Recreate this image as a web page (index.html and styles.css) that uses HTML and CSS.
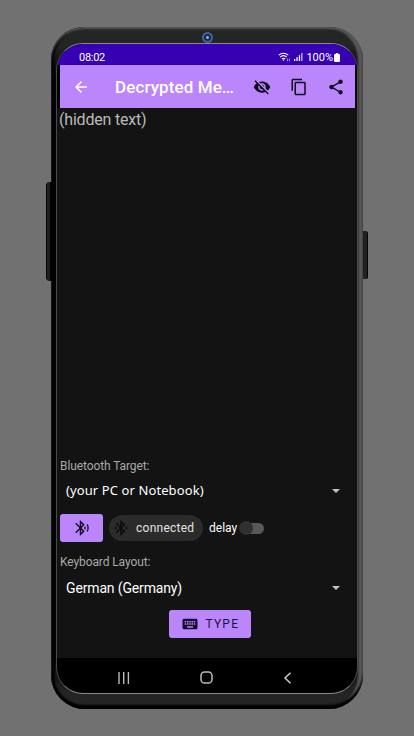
FILE: index.html
```html
<!DOCTYPE html>
<html lang="en">
<head>
<meta charset="utf-8">
<title>Decrypted Message</title>
<link rel="stylesheet" href="styles.css">
</head>
<body>
<div class="phone">
  <span class="side-button volume"></span>
  <span class="side-button power"></span>
  <span class="camera"></span>
  <div class="screen">
    <div class="status">
      <span class="clock">08:02</span>
      <svg class="wifi" width="13" height="10" viewBox="0 0 13 10" fill="none" stroke="#fff" stroke-width="1.1"><path d="M.7 3.2Q5.5-.8 10.3 3.2M2.2 5.1Q5.5 2.2 8.8 5.1M3.8 6.9Q5.5 5.5 7.2 6.9"/><path d="M4.3 7.5h2.4L5.5 9z" fill="#fff" stroke="none"/><path d="M9.5 6.5v2.8M11.4 6.5v2.8" stroke="#a99be0" stroke-width=".9"/></svg>
      <svg class="signal" width="9" height="8" viewBox="0 0 9 8" fill="#fff"><path d="M0 6h1.3v2H0zM2.4 4.3h1.3V8H2.4zM4.8 2.2h1.3V8H4.8z"/><path d="M7.2 0h1.3v8H7.2z" opacity=".75"/></svg>
      <span class="percent">100%</span>
      <svg class="battery" width="6" height="9" viewBox="0 0 6 9"><path d="M1.8 0h2.4v1H5q1 0 1 1v6q0 1-1 1H1Q0 9 0 8V2q0-1 1-1h.8z" fill="#fff"/></svg>
    </div>
    <div class="appbar">
      <svg class="back" width="18" height="18" viewBox="0 0 24 24" fill="#fff"><path d="M20 11H7.83l5.59-5.59L12 4l-8 8 8 8 1.41-1.41L7.83 13H20z"/></svg>
      <h1 class="title">Decrypted Me…</h1>
      <svg class="action" width="18" height="18" viewBox="0 0 24 24"><path d="M12 7c2.76 0 5 2.24 5 5 0 .65-.13 1.26-.36 1.83l2.92 2.92c1.51-1.26 2.7-2.89 3.43-4.75-1.73-4.39-6-7.5-11-7.5-1.4 0-2.74.25-3.98.7l2.16 2.16C10.74 7.13 11.35 7 12 7zM2 4.27l2.28 2.28.46.46C3.08 8.3 1.78 10.02 1 12c1.73 4.39 6 7.5 11 7.5 1.55 0 3.03-.3 4.38-.84l.42.42L19.73 22 21 20.73 3.27 3 2 4.27zM7.53 9.8l1.55 1.55c-.05.21-.08.43-.08.65 0 1.66 1.34 3 3 3 .22 0 .44-.03.65-.08l1.55 1.55c-.67.33-1.41.53-2.2.53-2.76 0-5-2.24-5-5 0-.79.2-1.53.53-2.2zm4.31-.78l3.15 3.15.02-.16c0-1.66-1.34-3-3-3l-.17.01z"/></svg>
      <svg class="action" width="18" height="18" viewBox="0 0 24 24"><path d="M16 1H4c-1.1 0-2 .9-2 2v14h2V3h12V1zm3 4H8c-1.1 0-2 .9-2 2v14c0 1.1.9 2 2 2h11c1.1 0 2-.9 2-2V7c0-1.1-.9-2-2-2zm0 16H8V7h11v14z"/></svg>
      <svg class="action" width="18" height="18" viewBox="0 0 24 24"><path d="M18 16.08c-.76 0-1.44.3-1.96.77L8.91 12.7c.05-.23.09-.46.09-.7s-.04-.47-.09-.7l7.05-4.11c.54.5 1.25.81 2.04.81 1.66 0 3-1.34 3-3s-1.34-3-3-3-3 1.34-3 3c0 .24.04.47.09.7L8.04 9.81C7.5 9.31 6.79 9 6 9c-1.66 0-3 1.34-3 3s1.34 3 3 3c.79 0 1.5-.31 2.04-.81l7.12 4.16c-.05.21-.08.43-.08.65 0 1.61 1.31 2.92 2.92 2.92s2.92-1.31 2.92-2.92-1.31-2.92-2.92-2.92z"/></svg>
    </div>
    <div class="content">
      <p class="message">(hidden text)</p>
      <div class="label">Bluetooth Target:</div>
      <div class="select target"><span>(your PC or Notebook)</span><i class="caret"></i></div>
      <div class="row">
        <div class="bt-button"><svg width="18" height="18" viewBox="0 0 24 24" fill="#18102a"><path d="M14.24 12.01l2.32 2.32c.28-.72.44-1.51.44-2.33 0-.82-.16-1.59-.43-2.31l-2.33 2.32zm5.29-5.3l-1.26 1.26c.63 1.21.98 2.57.98 4.02s-.36 2.82-.98 4.02l1.2 1.2c.97-1.54 1.54-3.36 1.54-5.31-.01-1.89-.55-3.67-1.48-5.19zm-3.82 1L10 2H9v7.59L4.41 5 3 6.41 8.59 12 3 17.59 4.41 19 9 14.41V22h1l5.71-5.71-4.3-4.29 4.3-4.29zM11 5.83l1.88 1.88L11 9.59V5.83zm1.88 10.46L11 18.17v-3.76l1.88 1.88z"/></svg></div>
        <div class="chip"><svg width="18" height="18" viewBox="0 0 24 24" fill="#0c0c0c"><path d="M7 12l-2-2-2 2 2 2 2-2zm10.71-4.29L12 2h-1v7.59L6.41 5 5 6.41 10.59 12 5 17.59 6.41 19 11 14.41V22h1l5.71-5.71-4.3-4.29 4.3-4.29zM13 5.83l1.88 1.88L13 9.59V5.83zm1.88 10.46L13 18.17v-3.76l1.88 1.88zM19 10l-2 2 2 2 2-2-2-2z"/></svg><span>connected</span></div>
        <span class="delay">delay</span>
        <span class="switch"><i class="thumb"></i></span>
      </div>
      <div class="label keyboard">Keyboard Layout:</div>
      <div class="select layout"><span>German (Germany)</span><i class="caret"></i></div>
      <div class="type-button"><svg width="18" height="18" viewBox="0 0 24 24" fill="#150b28"><path d="M20 5H4c-1.1 0-1.99.9-1.99 2L2 17c0 1.1.9 2 2 2h16c1.1 0 2-.9 2-2V7c0-1.1-.9-2-2-2zm-9 3h2v2h-2V8zm0 3h2v2h-2v-2zM8 8h2v2H8V8zm0 3h2v2H8v-2zm-1 2H5v-2h2v2zm0-3H5V8h2v2zm9 7H8v-2h8v2zm0-4h-2v-2h2v2zm0-3h-2V8h2v2zm3 3h-2v-2h2v2zm0-3h-2V8h2v2z"/></svg><span>TYPE</span></div>
    </div>
    <div class="nav">
      <svg width="12" height="12" viewBox="0 0 12 12" stroke="#bbb" stroke-width="1.4"><path d="M1 0v12M5.7 0v12M10.4 0v12"/></svg>
      <svg width="13" height="13" viewBox="0 0 13 13" fill="none" stroke="#bbb" stroke-width="1.5"><rect x="1" y="1" width="11" height="11" rx="3.6"/></svg>
      <svg width="12" height="12" viewBox="0 0 12 12" fill="none" stroke="#ccc" stroke-width="1.5"><path d="M8.5.7L3 6l5.5 5.3"/></svg>
    </div>
  </div>
</div>
</body>
</html>
```
FILE: styles.css
```css
* { box-sizing: border-box; }
body {
  margin: 0;
  height: 736px;
  padding: 27px 0 0 51px;
  background: #717171;
  font-family: Roboto, "Liberation Sans", sans-serif;
  overflow: hidden;
}
.phone {
  position: relative;
  width: 312px;
  height: 682px;
  padding: 16px 5px 15px;
  border-radius: 33px 33px 34px 34px;
  background: linear-gradient(#232625 0 18px, #030303 50px 630px, #242424 665px);
  box-shadow: inset 0 2px 2px #555, inset 0 -4px 2px #000, inset 3px 0 2px #000, inset -5px 0 2px #575757;
}
.side-button { position: absolute; background: #202120; }
.volume {
  left: -5px;
  top: 155px;
  width: 6px;
  height: 99px;
  border-radius: 4px 0 0 4px;
  border-left: 1px solid #050505;
  border-right: 2px solid #000;
}
.power {
  left: 312px;
  top: 204px;
  width: 5px;
  height: 48px;
  border-radius: 0 3px 2px 0;
  border-right: 1px solid #050505;
}
.camera {
  position: absolute;
  left: 151px;
  top: 5px;
  width: 11px;
  height: 11px;
  border-radius: 50%;
  background: radial-gradient(circle, #8fa9dc 0 1px, #17264c 2px 3px, #456196 4px);
}
.screen {
  width: 302px;
  height: 651px;
  display: flex;
  flex-direction: column;
  border: 1px solid #8a8a8a;
  border-right-color: #4a4a4a;
  border-left-color: #4a4a4a;
  border-radius: 27px;
  background: #000;
  overflow: hidden;
}
.status {
  height: 21px;
  flex: none;
  display: flex;
  align-items: center;
  padding: 5px 17px 0 22px;
  background: #3700b3;
  color: #fff;
  font-size: 11px;
}
.clock { margin-right: auto; letter-spacing: -.3px; }
.wifi { margin-right: 3px; }
.signal { margin-right: 3px; }
.percent { margin-right: 1px; }
.appbar {
  height: 43px;
  flex: none;
  display: flex;
  align-items: center;
  margin: 0 2px 0 3px;
  padding: 0 10px 0 12px;
  background: #bb86fc;
}
.title {
  flex: 1;
  margin: 1px 0 0 25px;
  color: #fff;
  font-size: 17px;
  line-height: 22px;
  font-weight: 500;
  letter-spacing: .1px;
  white-space: nowrap;
}
.action { margin-left: 19px; fill: #0e071c; }
.content {
  flex: 1;
  display: flex;
  flex-direction: column;
  background: #131313;
  padding: 0 2px 0 3px;
}
.message {
  flex: 1;
  margin: 0 0 0 -1px;
  padding-top: 2px;
  color: #bababa;
  font-size: 16px;
  line-height: 20px;
  letter-spacing: -.2px;
}
.label {
  height: 16px;
  color: #a9a9a9;
  font-size: 12px;
  line-height: 16px;
  letter-spacing: -.1px;
}
.select {
  display: flex;
  align-items: center;
  justify-content: space-between;
  padding: 0 15px 0 6px;
  height: 33px;
  color: #fff;
  font-size: 14px;
  letter-spacing: -.15px;
}
.target { font-family: "Noto Sans", sans-serif; font-size: 13px; letter-spacing: .1px; }
.target span { margin-bottom: 2px; }
.caret {
  border: 4.5px solid transparent;
  border-top-color: #c4c4c4;
  border-bottom: 0;
}
.row { display: flex; align-items: center; height: 28px; margin-top: 7px; }
.bt-button {
  width: 43px;
  height: 28px;
  display: grid;
  place-items: center;
  border-radius: 3px;
  background: #bb86fc;
}
.chip {
  width: 94px;
  height: 26px;
  margin-left: 6px;
  display: flex;
  align-items: center;
  padding-left: 3px;
  gap: 6px;
  border-radius: 13px;
  background: #2b2b2b;
  color: #e3e3e3;
  font-size: 12px;
  letter-spacing: .25px;
}
.delay { margin-left: 6px; color: #fff; font-size: 12px; }
.switch {
  margin-left: 4px;
  width: 23px;
  height: 11px;
  display: flex;
  align-items: center;
  border-radius: 6px;
  background: #585858;
}
.thumb { flex: none; width: 14px; height: 14px; margin-left: -2px; border-radius: 50%; background: #303030; }
.keyboard { margin-top: 12px; }
.layout { height: 36px; }
.type-button {
  align-self: center;
  width: 82px;
  height: 28px;
  margin: 4px 0 20px 4px;
  display: flex;
  align-items: center;
  padding-left: 12px;
  gap: 7px;
  border-radius: 3px;
  background: #bb86fc;
  color: #20113a;
  font-size: 12px;
  letter-spacing: 1.2px;
}
.nav {
  height: 35px;
  flex: none;
  display: flex;
  align-items: center;
  justify-content: space-between;
  padding: 4px 63px 0 61px;
}
```
